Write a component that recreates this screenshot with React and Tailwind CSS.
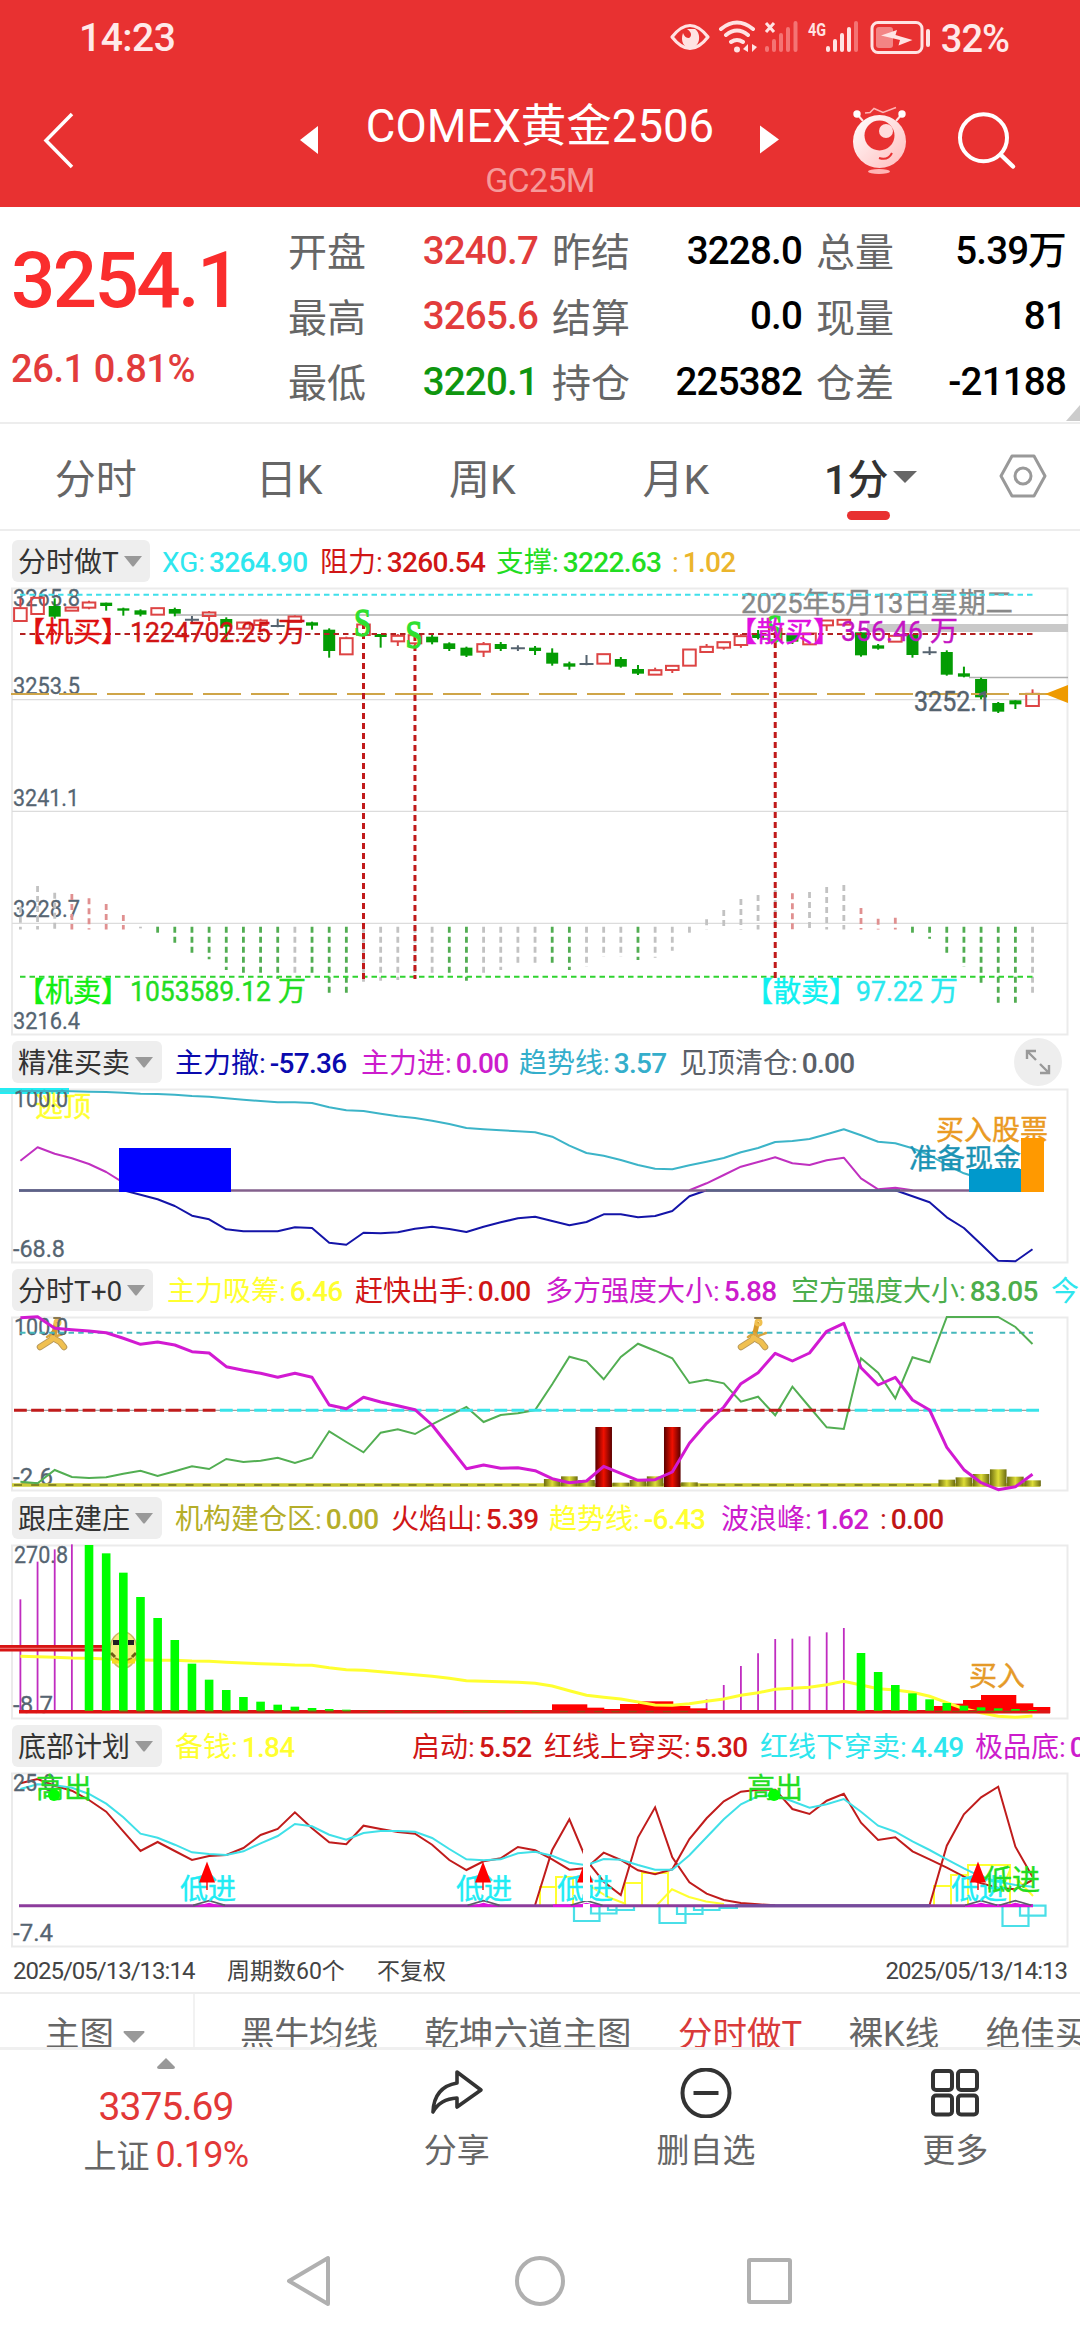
const FONT = 'font-[Roboto,"Noto_Sans_CJK_SC",sans-serif]'

// 60 one-minute bars share the same x positions in every panel
const X = (i) => 20.4 + i * 17.155

// series are stored in thirds of a pixel below the panel group's origin
const line = (values, origin, from = 0) =>
  values.map((v, i) => `${X(from + i).toFixed(1)},${(origin + v / 3).toFixed(1)}`).join(' ')

// [kind, body top, body bottom, high, low]
const CANDLES = [
  ['r', 203, 243, 175, 243], ['r', 172, 222, 172, 222], ['g', 198, 230, 175, 236], ['r', 201, 212, 201, 212],
  ['r', 186, 203, 182, 208], ['g', 188, 198, 188, 212], ['g', 205, 212, 203, 227], ['g', 211, 224, 208, 229],
  ['r', 203, 224, 203, 224], ['g', 207, 221, 203, 229], ['n', 239, 239, 228, 248], ['r', 216, 228, 213, 243],
  ['g', 237, 260, 232, 300], ['r', 246, 266, 246, 266], ['r', 240, 255, 236, 262], ['n', 258, 258, 236, 262],
  ['r', 228, 246, 226, 246], ['g', 247, 257, 245, 269], ['g', 269, 333, 265, 353], ['r', 293, 343, 290, 343],
  ['r', 252, 285, 252, 285], ['g', 282, 291, 282, 323], ['r', 286, 304, 282, 318], ['r', 284, 310, 284, 318],
  ['g', 290, 307, 282, 313], ['g', 310, 327, 307, 333], ['g', 323, 347, 320, 351], ['r', 311, 335, 306, 351],
  ['g', 312, 327, 306, 333], ['n', 325, 325, 316, 333], ['g', 323, 333, 318, 345], ['g', 338, 371, 325, 377],
  ['g', 370, 380, 365, 389], ['n', 372, 372, 345, 376], ['r', 341, 371, 341, 371], ['g', 357, 380, 351, 383],
  ['g', 387, 401, 375, 405], ['r', 389, 404, 383, 404], ['r', 376, 390, 376, 399], ['r', 327, 377, 327, 377],
  ['r', 319, 336, 312, 336], ['r', 305, 323, 305, 329], ['r', 287, 315, 282, 323], ['g', 281, 294, 270, 298],
  ['r', 265, 300, 265, 300], ['g', 283, 305, 283, 312], ['r', 279, 313, 279, 313], ['r', 240, 256, 240, 273],
  ['r', 238, 254, 238, 254], ['g', 277, 346, 277, 350], ['g', 316, 326, 312, 329], ['r', 286, 305, 286, 305],
  ['g', 283, 345, 283, 353], ['n', 337, 337, 320, 345], ['g', 336, 404, 331, 407], ['g', 400, 410, 380, 412],
  ['g', 417, 472, 413, 478], ['g', 489, 515, 486, 519], ['g', 481, 493, 481, 507], ['r', 460, 498, 448, 498],
]

const POWER = [
  ['n', 1100], ['n', 1038], ['n', 1058], ['r', 1062], ['r', 1075], ['r', 1092], ['r', 1125], ['n', 1165],
  ['g', 1185], ['g', 1211], ['g', 1244], ['g', 1258], ['g', 1290], ['g', 1302], ['g', 1310], ['g', 1316],
  ['n', 1307], ['g', 1310], ['g', 1358], ['g', 1358], ['n', 1325], ['n', 1322], ['n', 1320], ['n', 1315],
  ['n', 1305], ['g', 1310], ['g', 1322], ['n', 1300], ['n', 1290], ['n', 1277], ['n', 1268], ['g', 1280],
  ['g', 1290], ['n', 1281], ['n', 1251], ['n', 1251], ['g', 1260], ['n', 1253], ['n', 1232], ['n', 1185],
  ['n', 1138], ['n', 1110], ['n', 1077], ['n', 1065], ['n', 1050], ['r', 1060], ['n', 1056], ['n', 1041],
  ['n', 1035], ['r', 1104], ['r', 1136], ['r', 1133], ['g', 1180], ['g', 1196], ['g', 1249], ['g', 1281],
  ['g', 1337], ['g', 1391], ['g', 1397], ['n', 1366],
]
const POWER_COLORS = { n: '#c2c2c2', r: '#e09090', g: '#52ad52' }

const TREND = [
  183, 183, 183, 184, 185, 186, 188, 191, 192, 194, 198, 200, 205, 209, 213, 217, 217, 219, 232, 241, 243, 251, 259,
  264, 272, 282, 294, 298, 301, 304, 307, 320, 347, 369, 377, 390, 405, 416, 418, 406, 395, 384, 367, 354, 336, 333,
  327, 313, 298, 316, 335, 340, 355, 376, 405, 430, 446,
]
const ENTER_LEFT = [392, 352, 371, 385, 402, 426, 458]
const ENTER_RIGHT = [481, 460, 435, 410, 396, 382, 400, 405, 391, 383, 445, 478, 473, 481]
const LEAVE_LEFT = [
  481, 494, 508, 528, 557, 568, 598, 604, 604, 604, 592, 594, 638, 644, 608, 610, 607, 596, 590, 597, 606, 590, 577,
  565, 560, 573, 586, 576, 553, 553, 562, 558, 543, 499, 481,
]
const LEAVE_RIGHT = [481, 499, 517, 562, 594, 643, 692, 694, 658]

const LONG = [
  863, 860, 895, 899, 903, 908, 925, 943, 936, 945, 965, 969, 1010, 1021, 1030, 1042, 1030, 1042, 1125, 1136, 1102,
  1116, 1127, 1139, 1185, 1250, 1316, 1305, 1315, 1313, 1322, 1346, 1358, 1353, 1309, 1330, 1351, 1349, 1326, 1240,
  1180, 1131, 1061, 1028, 970, 993, 969, 904, 880, 1013, 1065, 1042, 1110, 1140, 1252, 1319, 1358, 1379, 1370, 1333,
]
const SHORT = [
  1355, 1360, 1320, 1341, 1344, 1342, 1331, 1322, 1338, 1324, 1309, 1317, 1287, 1296, 1292, 1283, 1299, 1283, 1204,
  1236, 1267, 1208, 1198, 1212, 1183, 1157, 1131, 1176, 1155, 1150, 1140, 1063, 980, 994, 1048, 981, 941, 962, 985,
  1059, 1049, 1060, 1115, 1100, 1156, 1070, 1131, 1192, 1197, 985, 1028, 1105, 982, 997, 861, 861, 861, 861, 891, 942,
]
const SUCK = { 31: 1347, 32: 1339, 33: 1350, 35: 1358, 36: 1350, 37: 1339, 39: 1357, 54: 1349, 55: 1342, 56: 1332, 57: 1318, 58: 1340, 59: 1351 }

const WAVE = [
  499, 500, 502, 504, 505, 507, 509, 510, 511, 511, 513, 514, 517, 519, 521, 523, 525, 526, 533, 539, 541, 545, 550,
  554, 559, 565, 572, 574, 575, 577, 580, 588, 602, 616, 622, 627, 636, 645, 646, 641, 634, 627, 616, 608, 598, 595,
  592, 584, 574, 585, 596, 600, 607, 619, 638, 656, 668, 679, 682, 678,
]
const PEAKS = [[0, 328], [1, 215], [2, 178], [3, 163], [40, 628], [41, 585], [42, 528], [43, 490], [44, 447], [45, 446], [46, 439], [47, 427], [48, 414]]
const GREENS = [
  [4, 165], [5, 190], [6, 248], [7, 321], [8, 384], [9, 450], [10, 521], [11, 569], [12, 600], [13, 621], [14, 635],
  [15, 644], [16, 650], [17, 654], [18, 657], [19, 659], [49, 489], [50, 546], [51, 585], [52, 610], [53, 628],
  [54, 639], [55, 647], [56, 652], [57, 655], [58, 657], [59, 660],
]
// [left, right, top]
const FLAMES = [
  [552, 587, 643], [587, 604, 653], [604, 620, 657], [620, 638, 642], [638, 673, 634], [673, 690, 648], [690, 707, 655],
  [707, 724, 660], [934, 951, 648], [951, 963, 641], [963, 981, 630], [981, 1016, 615], [1016, 1033, 640], [1033, 1050, 651],
]

const UP = [
  880, 867, 887, 902, 930, 965, 1024, 1083, 1056, 1083, 1110, 1098, 1095, 1074, 1035, 1017, 967, 1015, 1057, 1063,
  1007, 1017, 1026, 1031, 1064, 1110, 1140, 1114, 1105, 1071, 1081, 1108, 1139, 1134, 1088, 1110, 1141, 1153, 1138,
  1047, 985, 934, 905, 899, 899, 957, 972, 932, 911, 998, 1050, 1042, 1084, 1108, 1133, 1160, 1180, 1194, 1198, 1170,
]
const DOWN = [
  897, 883, 886, 893, 912, 941, 982, 1031, 1043, 1064, 1087, 1092, 1095, 1084, 1060, 1038, 1002, 1009, 1034, 1049,
  1029, 1023, 1023, 1025, 1044, 1077, 1108, 1111, 1108, 1090, 1085, 1097, 1118, 1126, 1107, 1109, 1125, 1139, 1139,
  1096, 1042, 988, 943, 918, 916, 934, 953, 943, 927, 965, 1007, 1025, 1054, 1080, 1108, 1135, 1160, 1175, 1185, 1190,
]
const START = [1245, 1080, 988, 1110, 1175, 1215, 1042, 952, 1102, 1177, 1211, 1230, 1239, 1243, 1246]
const START_RIGHT = [1245, 1067, 973, 922, 890, 1070, 1160]

function Label({ x, y, w, children }) {
  return (
    <text x={x} y={y} fontSize="24.5" fill="#566572" stroke="#566572" strokeWidth="0.3" textLength={w} lengthAdjust="spacingAndGlyphs">{children}</text>
  )
}

function Note({ x, y, fill, size = 28, w, children }) {
  return (
    <text x={x} y={y} fontSize={size} fill={fill} stroke={fill} strokeWidth="0.4" textLength={w} lengthAdjust="spacingAndGlyphs">{children}</text>
  )
}

function Panel({ top, height, children }) {
  return (
    <svg viewBox={`0 ${top} 1080 ${height}`} width="1080" height={height} className="block shrink-0 overflow-visible">
      <rect x="12" y={top + 0.5} width="1055.5" height={height - 1} fill="none" stroke="#ebebeb" strokeWidth="2" />
      {children}
    </svg>
  )
}

function Legend({ name, width, items, children }) {
  return (
    <div className="flex items-center h-[54px] shrink-0 text-[28px] leading-none whitespace-nowrap overflow-hidden">
      <div className={`flex items-center shrink-0 ml-3 h-[42px] rounded-md bg-[#eeeeee] text-[#333] pl-[6px] ${width}`}>
        <span className="pt-[3px]">{name}</span>
        <svg width="20" height="11" viewBox="0 0 20 11" className="ml-1">
          <path d="M1 0h18L11 10q-1 1-2 0z" fill="#999" />
        </svg>
      </div>
      {items.map(([label, value, cls]) => (
        <div key={label + value} className={`flex shrink-0 pt-[4px] ${cls}`}>
          <span>{label}:</span>
          <span className="ml-1 font-medium tracking-[-0.7px]">{value}</span>
        </div>
      ))}
      {children}
    </div>
  )
}

function StatusBar() {
  return (
    <div className="flex justify-between items-center h-[77px] pl-[79px] pr-[71px] text-[#ffe9e9] text-[39px] leading-none">
      <span className="font-medium tracking-[-0.5px]">14:23</span>
      <div className="flex items-center">
        <svg width="264" height="40" viewBox="668 18 264 40" fill="none" stroke="#ffe3e3">
          <path d="M671 36Q689 13 707 36Q689 59 671 36z" strokeWidth="3.200" strokeLinejoin="round" />
          <path d="M686 28c6 4 4 8 2 9c-3 0-5-2-6-5c-3 8 1 15 7 15c10 0 12-14 5-19z" fill="#ffe3e3" stroke="none" />
          <path d="M720 28Q736 15 752 28M725 34Q736 25 747 34M730 41Q736 37 742 41" strokeWidth="4" strokeLinecap="round" />
          <circle cx="736" cy="48.500" r="3" fill="#ffe3e3" stroke="none" />
          <path d="M742 48l5-5v8zM751 43v8l5-5z" fill="#ffe3e3" stroke="none" />
          <path d="M765 22l8 9M773 22l-8 9" strokeWidth="3" />
          <path d="M766 47v2M773 40v9M780 34v15M787 28v21M794.500 22v27" stroke="#f47474" strokeWidth="4" strokeLinecap="round" />
          <path d="M827 47v2M834 40v9M841 34v15M848 28v21" strokeWidth="4" strokeLinecap="round" />
          <path d="M855 22v27" stroke="#f47474" strokeWidth="4" strokeLinecap="round" />
          <text x="807" y="34.500" fontSize="19" fontWeight="700" fill="#ffe3e3" stroke="none" textLength="18" lengthAdjust="spacingAndGlyphs">4G</text>
          <rect x="871" y="21.500" width="50" height="30" rx="6" strokeWidth="3" />
          <rect x="875" y="26" width="17" height="21" rx="3" fill="#f38585" stroke="none" />
          <path d="M880 34.500l16-5.500l-1.500 5l5 1.500l12 3.500l-14 5.500l1.500-5.500z" fill="#ffe3e3" stroke="none" />
          <path d="M927 30v14" strokeWidth="4" strokeLinecap="round" />
        </svg>
        <span className="ml-2 font-medium text-[38px] tracking-[-1px]">32%</span>
      </div>
    </div>
  )
}

function Header() {
  return (
    <div className="flex h-[130px]">
      <svg width="340" height="131" viewBox="0 76 340 131">
        <path d="M72 113L46 139.500L72 166" fill="none" stroke="#fff" strokeWidth="3.500" />
        <path d="M300 139l18-14v28z" fill="#fff" />
      </svg>
      <div className="flex flex-col items-center w-[400px] pt-[27px] leading-none text-white">
        <div className="text-[45.500px] h-[52px] whitespace-nowrap">COMEX黄金2506</div>
        <div className="mt-[7px] text-[34px] text-[#f59a9a] tracking-[-0.7px]">GC25M</div>
      </div>
      <svg width="340" height="131" viewBox="740 76 340 131">
        <defs>
          <linearGradient id="ball" x1="0" y1="0" x2="1" y2="1">
            <stop offset="0" stopColor="#fff" />
            <stop offset="1" stopColor="#ffbcbc" />
          </linearGradient>
        </defs>
        <path d="M779 138.500l-19-14v28z" fill="#fff" />
        <circle cx="879.500" cy="140.500" r="26.500" fill="url(#ball)" />
        <circle cx="879.500" cy="134.500" r="15" fill="#e83131" />
        <circle cx="886" cy="130" r="7" fill="#ffdcdc" />
        <path d="M879 157q9 3 13-5" fill="none" stroke="#e83131" strokeWidth="2" />
        <path d="M857 113l6 7M902 113l-6 7" stroke="#ffe3e3" strokeWidth="2" />
        <circle cx="857" cy="113" r="3.700" fill="#fff" />
        <circle cx="902" cy="113" r="3.700" fill="#fff" />
        <path d="M865 112l5-.5l4-4l9 4l13-5" fill="none" stroke="#ffb5b5" strokeWidth="1.500" />
        <ellipse cx="879" cy="170.500" rx="11" ry="2.500" fill="#ffb5b5" />
        <circle cx="983.500" cy="136.700" r="23.500" fill="none" stroke="#fff" strokeWidth="4" />
        <path d="M1001 154l12 11.500" stroke="#fff" strokeWidth="4.500" strokeLinecap="round" />
      </svg>
    </div>
  )
}

const QUOTES = [
  [['开盘', '3240.7', 'text-[#e23c3c]'], ['昨结', '3228.0', 'text-black'], ['总量', '5.39万', 'text-black']],
  [['最高', '3265.6', 'text-[#e23c3c]'], ['结算', '0.0', 'text-black'], ['现量', '81', 'text-black']],
  [['最低', '3220.1', 'text-[#0f960f]'], ['持仓', '225382', 'text-black'], ['仓差', '-21188', 'text-black']],
]

function Quote() {
  return (
    <div className="relative flex h-[214px]">
      <div className="w-[288px] pl-[11px] leading-none font-medium">
        <div className="mt-[35px] h-[78px] text-[78px] text-[#fa2d2d] tracking-[-2.6px]">3254.1</div>
        <div className="mt-[30px] text-[38px] text-[#e23c3c] tracking-[-0.4px]">26.1 0.81%</div>
      </div>
      <div className="flex flex-col pt-[14px]">
        {QUOTES.map((row) => (
          <div key={row[0][0]} className="flex h-[65.5px] items-center leading-none">
            {row.map(([label, value, color]) => (
              <div key={label} className="flex items-center justify-between w-[250px] mr-[14px]">
                <span className="text-[39px] text-[#666]">{label}</span>
                <span className={`text-[38.5px] font-medium tracking-[-0.8px] -mt-[6px] ${color}`}>{value}</span>
              </div>
            ))}
          </div>
        ))}
      </div>
      <svg width="14" height="16" className="absolute right-0 bottom-0">
        <path d="M14 0v16H0z" fill="#ccc" />
      </svg>
    </div>
  )
}

function Tabs() {
  return (
    <div className="flex h-[109px] border-y-2 border-[#ededed] text-[41px] leading-none text-[#666]">
      {['分时', '日K', '周K', '月K'].map((t) => (
        <div key={t} className="w-[193.4px] text-center pt-[36px] pr-[2px]">{t}</div>
      ))}
      <div className="relative w-[193.4px] flex justify-center pt-[36px] font-medium text-[#333]">
        <span className="-ml-[28px]">1分</span>
        <svg width="24" height="13" viewBox="0 0 24 13" className="absolute left-[119px] top-[47px]">
          <path d="M0 0h24L12 12z" fill="#666" />
        </svg>
        <div className="absolute left-[73px] top-[87px] w-[43px] h-[9px] rounded-full bg-[#e83131]" />
      </div>
      <svg width="50" height="46" viewBox="0 0 50 46" fill="none" stroke="#999" strokeWidth="3" className="ml-[31px] mt-[29px]">
        <path d="M14 3h22l11 20l-11 20h-22l-11-20z" strokeLinejoin="round" />
        <circle cx="25" cy="23" r="8" />
      </svg>
    </div>
  )
}

function MainPanel() {
  const O = 540
  return (
    <Panel top={588} height={447}>
      <path d="M12 699.700H1068M12 811.300H1068M12 923.300H1068" stroke="#dcdcdc" strokeWidth="1.300" />
      <path d="M175 615H1068M969 677.500H1068" stroke="#b0b0b0" strokeWidth="1.500" />
      <rect x="867" y="624" width="201" height="8" fill="#c9c9c9" />
      <Label x="13" y="606" w="67">3265.8</Label>
      <Label x="13" y="694" w="67">3253.5</Label>
      <Label x="13" y="806" w="66">3241.1</Label>
      <Label x="13" y="917" w="67">3228.7</Label>
      <Label x="13" y="1029" w="67">3216.4</Label>
      <Note x="741" y="613" w="272" size="28" fill="#888">2025年5月13日星期二</Note>
      {POWER.map(([c, v], i) => (
        <line key={i} x1={X(i)} x2={X(i)} y1={v < 1165 ? O + v / 3 : 926.700} y2={v < 1165 ? 929.500 : O + v / 3} stroke={POWER_COLORS[c]} strokeWidth="2.800" strokeDasharray="6 4" />
      ))}
      {CANDLES.map(([c, t, b, h, l], i) => {
        const x = X(i)
        if (c === 'n') return <path key={i} d={`M${x - 7} ${O + t / 3}h14M${x} ${O + h / 3}V${O + l / 3}`} stroke="#55636f" strokeWidth="2" />
        if (c === 'g') {
          return (
            <g key={i} fill="#049c04">
              <rect x={x - 6} y={O + t / 3} width="12" height={(b - t) / 3} />
              <rect x={x - 1} y={O + h / 3} width="2" height={(l - h) / 3} />
            </g>
          )
        }
        return (
          <g key={i} stroke="#dd4444" strokeWidth="2" fill="none">
            <rect x={x - 6.300} y={O + t / 3 + 0.5} width="12.600" height={(b - t) / 3 - 0.5} />
            <path d={`M${x} ${O + h / 3}V${O + t / 3}M${x} ${O + b / 3}V${O + l / 3}`} />
          </g>
        )
      })}
      <path d="M20 594.700H1033" stroke="#3fe0ea" strokeWidth="2" strokeDasharray="5.500 4" />
      <path d="M20 634H1033" stroke="#b32020" strokeWidth="2" strokeDasharray="5.500 4" />
      <path d="M20 976.700H1033" stroke="#2fd32f" strokeWidth="2" strokeDasharray="5.500 4" />
      <path d="M11 694H1050" stroke="#cfa548" strokeWidth="2" strokeDasharray="38 10" />
      <path d="M1045 694l23-9v18z" fill="#ee9a00" />
      <Note x="914" y="711" w="77" size="27" fill="#55636f">3252.1</Note>
      {[[20, 623], [23, 635], [44, 632]].map(([i, y]) => (
        <line key={i} x1={X(i)} x2={X(i)} y1={y} y2="979" stroke="#c01a1a" strokeWidth="3" strokeDasharray="6 4" />
      ))}
      {[[20, 636], [23, 648], [44, 642]].map(([i, y]) => (
        <text key={i} x={X(i) - 9.500} y={y} fontSize="41" textLength="17" lengthAdjust="spacingAndGlyphs" fill="#2fe02f" stroke="#2fe02f" strokeWidth="1.500" className="font-['Liberation_Serif',serif]">S</text>
      ))}
      <Note x="17" y="642" w="112" fill="#e01010">【机买】</Note>
      <Note x="130" y="642" w="141" fill="#d01414">1224702.25</Note>
      <Note x="278" y="642" fill="#d01414">万</Note>
      <Note x="17" y="1002" w="112" fill="#10ee10">【机卖】</Note>
      <Note x="130" y="1001" w="141" fill="#22dd22">1053589.12</Note>
      <Note x="278" y="1001" fill="#22dd22">万</Note>
      <Note x="729" y="642" w="112" fill="#e010e0">【散买】</Note>
      <Note x="841" y="641" w="82" fill="#c414c4">356.46</Note>
      <Note x="930" y="641" fill="#c414c4">万</Note>
      <Note x="745" y="1002" w="112" fill="#10f0f0">【散卖】</Note>
      <Note x="856" y="1001" w="67" fill="#2ae8ee">97.22</Note>
      <Note x="930" y="1001" fill="#2ae8ee">万</Note>
    </Panel>
  )
}

function TradePanel() {
  return (
    <Panel top={1089} height={174}>
      <path d="M0 1091H69" stroke="#25ecf2" strokeWidth="6" />
      <path d="M0 1091H69" stroke="#5ad0d8" strokeWidth="1" />
      <Note x="35" y="1117" w="56" fill="#ffff30">逃顶</Note>
      <Label x="14" y="1107" w="54">100.0</Label>
      <Label x="13" y="1257" w="52">-68.8</Label>
      <g fill="none" strokeWidth="2" strokeLinejoin="round">
        <polyline points={line(TREND, 1030)} stroke="#3cb4c8" />
        <polyline points={line(ENTER_LEFT, 1030)} stroke="#c030c0" />
        <polyline points={line(ENTER_RIGHT, 1030, 39)} stroke="#c030c0" />
        <polyline points={line(LEAVE_LEFT, 1030, 6)} stroke="#1414a8" />
        <polyline points={line(LEAVE_RIGHT, 1030, 51)} stroke="#1414a8" />
      </g>
      <path d="M19 1190.500H1033" stroke="#83608c" strokeWidth="2.600" />
      <path d="M19 1190.500H120M706 1190.500H900" stroke="#5b6388" strokeWidth="2.600" />
      <rect x="119" y="1148" width="112" height="44" fill="#0000ff" />
      <Note x="936" y="1140" w="112" fill="#ea9a22">买入股票</Note>
      <Note x="909" y="1169" w="112" fill="#1b93b4">准备现金</Note>
      <rect x="969" y="1169" width="52" height="23" fill="#0099cc" />
      <rect x="1021" y="1138" width="23" height="54" fill="#ff9900" />
    </Panel>
  )
}

function Runner({ x }) {
  return (
    <g transform={`translate(${x} 1318)`} fill="none" stroke="#f0c050" strokeLinecap="round" strokeLinejoin="round">
      <path d="M18 15L15 22L4 29M17 20L24 24L28 29" stroke="#b99a5c" strokeWidth="6.500" />
      <path d="M18 15L15 22L4 29M17 20L24 24L28 29" strokeWidth="4.500" />
      <path d="M20 6L18 15" stroke="#d69a28" strokeWidth="5" />
      <path d="M11 19l6-4l4 3l8-3" stroke="#d9a640" strokeWidth="2.500" />
      <circle cx="21.500" cy="4.500" r="2.500" strokeWidth="3" />
      <path d="M18 0h6" stroke="#8c7a50" strokeWidth="2" />
    </g>
  )
}

function IntradayPanel() {
  return (
    <Panel top={1317} height={174}>
      <defs>
        <linearGradient id="gold">
          <stop offset="0" stopColor="#6b6b10" />
          <stop offset=".5" stopColor="#dede38" />
          <stop offset="1" stopColor="#6b6b10" />
        </linearGradient>
        <linearGradient id="ruby">
          <stop offset="0" stopColor="#5a0000" />
          <stop offset=".5" stopColor="#f01000" />
          <stop offset="1" stopColor="#5a0000" />
        </linearGradient>
      </defs>
      <Runner x={36} />
      <Runner x={737} />
      <Label x="14" y="1335" w="54">100.0</Label>
      <Label x="13" y="1485" w="40">-2.6</Label>
      <path d="M20 1332.700H1033" stroke="#44b8bc" strokeWidth="2" strokeDasharray="5.500 4.200" />
      <path d="M12 1485H1040" stroke="#cccc36" strokeWidth="3.500" />
      <path d="M14 1485H1040" stroke="#6e6e1c" strokeWidth="1.500" strokeDasharray="8 9.155" />
      {Object.entries(SUCK).map(([i, v]) => (
        <rect key={i} x={X(Number(i)) - 8.300} y={1030 + v / 3} width="16.600" height={(1369 - v) / 3} fill="url(#gold)" />
      ))}
      {[34, 38].map((i) => (
        <rect key={i} x={X(i) - 8.300} y="1427" width="16.600" height="60" fill="url(#ruby)" />
      ))}
      <polyline points={line(SHORT, 1030)} fill="none" stroke="#52ae52" strokeWidth="2" />
      <path d="M14 1410.300H1039" stroke="#8a8a8a" strokeWidth="1" />
      <g strokeWidth="3" strokeDasharray="12.800 4.355">
        <path d="M14 1410.300H218M700.300 1410.300H851" stroke="#c01c1c" />
        <path d="M219.900 1410.300H699M854.700 1410.300H1040" stroke="#38e4ea" />
      </g>
      <polyline points={line(LONG, 1030)} fill="none" stroke="#d21ad2" strokeWidth="3" strokeLinejoin="round" />
    </Panel>
  )
}

function BankerPanel() {
  return (
    <Panel top={1545} height={174}>
      <Label x="14" y="1563" w="54">270.8</Label>
      <Label x="13" y="1713" w="40">-8.7</Label>
      {PEAKS.map(([i, v]) => (
        <line key={i} x1={X(i)} x2={X(i)} y1={1490 + v / 3} y2="1711" stroke="#c02cc0" strokeWidth="1.800" />
      ))}
      <path d="M0 1648.300H105" stroke="#d81414" strokeWidth="6.500" />
      <path d="M0 1648.300H105" stroke="#f08080" strokeWidth="1" />
      {FLAMES.map(([l, r, t]) => (
        <rect key={l} x={l} y={1490 + t / 3} width={r - l + 0.3} height={(669 - t) / 3} fill="#ff0000" />
      ))}
      <polyline points={line(WAVE, 1490)} fill="none" stroke="#ffff30" strokeWidth="3" />
      <ellipse cx="123.500" cy="1650" rx="13.500" ry="18" fill="#f5ec80" stroke="#cdb765" strokeWidth="1.500" />
      <path d="M113 1640h6v5h-6zM128 1640h6v5h-6z" fill="#222" />
      <path d="M111 1653l4 4M136 1653l-4 4" fill="none" stroke="#6e5c14" strokeWidth="3" />
      <path d="M112 1661h23" stroke="#f5da20" strokeWidth="5" />
      <path d="M115 1658q8 5 17 0" fill="none" stroke="#9c8220" strokeWidth="1.500" />
      <path d="M19 1711.700H1050" stroke="#dd1414" strokeWidth="3.500" />
      <path d="M120 1711.700H540M560 1711.700H700M935 1711.700H1036" stroke="#7a5a10" strokeWidth="1" strokeDasharray="8 9.155" />
      {GREENS.map(([i, v]) => (
        <rect key={i} x={X(i) - 4.300} y={1490 + v / 3} width="8.600" height={Math.max((662 - v) / 3, 1)} fill="#00ff00" />
      ))}
      <Note x="969" y="1686" w="56" fill="#e59a28">买入</Note>
    </Panel>
  )
}

function BottomPanel() {
  const base = 1905.7
  return (
    <Panel top={1773} height={174}>
      <g fill="none" stroke="#ffff30" strokeWidth="2">
        <path d="M540 1905V1887h16V1905M556 1887V1877h17V1905M573 1877h10M625 1905V1883h17V1905M642 1883V1873h26V1905" />
        <path d="M590 1886l18 11l18 7M657 1905L672 1889.300L689 1897L706 1901.500L724 1904" />
        <path d="M934 1905V1886h17V1905M951 1886V1875h17V1905M968 1875V1865h42V1905M1010 1870L1001 1892M1016 1878l17 18" />
      </g>
      <g fill="none" stroke="#4adfe8" strokeWidth="2.200">
        <path d="M574 1906v15h25.500v-15M591 1906v7.500h25.500v-7.500M608 1906v4h26v-4" />
        <path d="M659.500 1906v17h26v-17M677 1906v8h25.500v-8M694 1906v4h25.500v-4M719 1908h19" />
        <path d="M1002.500 1906v20h26v-20M1020 1906v9.700h25.500v-10H1020" />
      </g>
      <g fill="none" stroke="#c01c1c" strokeWidth="2">
        <polyline points={line(UP, 1490)} />
        <polyline points={line(START, 1490, 30)} />
        <polyline points={line(START_RIGHT, 1490, 53)} />
      </g>
      <polyline points={line(DOWN, 1490)} fill="none" stroke="#40e0e8" strokeWidth="2" />
      <Label x="13" y="1791" w="42">25.0</Label>
      <Label x="13" y="1941" w="40">-7.4</Label>
      <path d="M19 1905.700H1033" stroke="#8c3c9c" strokeWidth="3" />
      <path d="M735 1905.700H930" stroke="#744c9c" strokeWidth="3" />
      <path d="M553 1905.700H600M965 1905.700H1033" stroke="#e010e0" strokeWidth="2.600" />
      {[11, 27, 33, 56, 58].map((i) => (
        <g key={i}>
          <path d={`M${X(i) - 15} ${base + 1}L${X(i)} ${base - 3}L${X(i) + 15} ${base + 1}z`} fill="#e010e0" />
          <path d={`M${X(i) - 16} ${base - 0.5}L${X(i)} ${base - 5}L${X(i) + 16} ${base - 0.5}`} fill="none" stroke="#5c5c68" strokeWidth="1.700" />
        </g>
      ))}
      <Note x="36" y="1798" w="56" fill="#22dd22">高出</Note>
      <Note x="747" y="1798" w="56" fill="#22dd22">高出</Note>
      <circle cx="54" cy="1795" r="6" fill="#00ff00" />
      <circle cx="774" cy="1795" r="6" fill="#00ff00" />
      <Note x="180" y="1899" w="56" fill="#20ecf4">低进</Note>
      <Note x="456" y="1899" w="56" fill="#20ecf4">低进</Note>
      <Note x="557" y="1899" w="56" fill="#20ecf4">低进</Note>
      <Note x="951" y="1899" w="56" fill="#20ecf4">低进</Note>
      <Note x="984" y="1890" w="56" fill="#22dd22">低进</Note>
      {[207, 483, 585, 978].map((x) => (
        <path key={x} d={`M${x} 1861.500l8 21h-16zM${x - 0.7} 1882h1.400v8h-1.400z`} fill="#ff0000" />
      ))}
      <rect x="583" y="1850" width="7" height="51" fill="#fff" />
      <rect x="583" y="1904" width="7" height="4" fill="#fff" />
    </Panel>
  )
}

function Charts() {
  return (
    <div className="flex flex-col pt-[2px]">
      <Legend
        name="分时做T"
        width="w-[138px]"
        items={[
          ['XG', '3264.90', 'ml-3 w-[158px] text-[#2ee6ee]'],
          ['阻力', '3260.54', 'w-[176px] text-[#d01616]'],
          ['支撑', '3222.63', 'w-[176px] text-[#22dd22]'],
          ['', '1.02', 'text-[#ebb52c]'],
        ]}
      />
      <MainPanel />
      <Legend
        name="精准买卖"
        width="w-[150px]"
        items={[
          ['主力撤', '-57.36', 'ml-[13px] w-[186px] text-[#0a0aae]'],
          ['主力进', '0.00', 'w-[158px] text-[#cc1ccc]'],
          ['趋势线', '3.57', 'w-[160px] text-[#34aecb]'],
          ['见顶清仓', '0.00', 'text-[#5a6068]'],
        ]}
      >
        <div className="flex items-center justify-center ml-auto mr-[18px] size-12 rounded-full bg-[#eeeeee]">
          <svg width="26" height="26" viewBox="0 0 26 26" fill="none" stroke="#999" strokeWidth="2.400">
            <path d="M2 10V2h9M2 2l9 9M24 16v8h-9M24 24l-9-9" />
          </svg>
        </div>
      </Legend>
      <TradePanel />
      <Legend
        name="分时T+0"
        width="w-[141px]"
        items={[
          ['主力吸筹', '6.46', 'ml-[14px] w-[188px] text-[#ffff30]'],
          ['赶快出手', '0.00', 'w-[190px] text-[#d01616]'],
          ['多方强度大小', '5.88', 'w-[246px] text-[#cc1ccc]'],
          ['空方强度大小', '83.05', 'w-[260px] text-[#4cae4c]'],
          ['今日', '', 'text-[#2ee6ee]'],
        ]}
      />
      <IntradayPanel />
      <Legend
        name="跟庄建庄"
        width="w-[150px]"
        items={[
          ['机构建仓区', '0.00', 'ml-[13px] w-[216px] text-[#b5ae2a]'],
          ['火焰山', '5.39', 'w-[158px] text-[#d01616]'],
          ['趋势线', '-6.43', 'w-[172px] text-[#ffff30]'],
          ['波浪峰', '1.62', 'w-[159px] text-[#cc1ccc]'],
          ['', '0.00', 'text-[#c01616]'],
        ]}
      />
      <BankerPanel />
      <Legend
        name="底部计划"
        width="w-[150px]"
        items={[
          ['备钱', '1.84', 'ml-[13px] w-[237px] text-[#ffff30]'],
          ['启动', '5.52', 'w-[132px] text-[#d01616]'],
          ['红线上穿买', '5.30', 'w-[216px] text-[#d01616]'],
          ['红线下穿卖', '4.49', 'w-[215px] text-[#2ee6ee]'],
          ['极品底', '0.00', 'text-[#cc1ccc]'],
        ]}
      />
      <BottomPanel />
    </div>
  )
}

function BottomBar() {
  return (
    <div className="flex h-[150px] border-t-[3px] border-[#f0f0f0] text-[33px] leading-none text-[#666]">
      <div className="flex flex-col items-center w-[332px] pt-2">
        <svg width="18" height="11" viewBox="0 0 18 11">
          <path d="M9 0l9 9q0 2-2 2H2q-2 0-2-2z" fill="#999" />
        </svg>
        <div className="mt-[19px] text-[39px] h-[39px] text-[#e23838] tracking-[-1px]">3375.69</div>
        <div className="flex items-center mt-[10px]">
          <span className="pt-[2px]">上证</span>
          <span className="ml-[6px] text-[36px] text-[#e23838] tracking-[-0.7px]">0.19%</span>
        </div>
      </div>
      <div className="flex flex-col items-center w-[249.3px] pt-[18px]">
        <svg width="54" height="50" viewBox="430 2068 54 50" fill="none" stroke="#333" strokeWidth="3.600" strokeLinejoin="round">
          <path d="M457 2072l24 18l-24 17v-9q-17 1-24 14q1-25 24-29z" />
        </svg>
        <span className="mt-[16px]">分享</span>
      </div>
      <div className="flex flex-col items-center w-[249.3px] pt-[18px]">
        <svg width="52" height="50" viewBox="0 0 52 50" fill="none" stroke="#333" strokeWidth="4">
          <circle cx="26" cy="25" r="23.500" />
          <path d="M13.500 25h25" />
        </svg>
        <span className="mt-[16px]">删自选</span>
      </div>
      <div className="flex flex-col items-center w-[249.3px] pt-[18px]">
        <svg width="50" height="50" viewBox="0 0 50 50" fill="none" stroke="#333" strokeWidth="4">
          <rect x="3" y="3" width="19" height="19" rx="3" />
          <rect x="28" y="3" width="19" height="19" rx="3" />
          <rect x="3" y="27.500" width="19" height="19" rx="3" />
          <rect x="28" y="27.500" width="19" height="19" rx="3" />
        </svg>
        <span className="mt-[16px]">更多</span>
      </div>
    </div>
  )
}

export default function App() {
  return (
    <div className={`flex flex-col w-[1080px] h-[2340px] overflow-hidden bg-white ${FONT}`}>
      <div className="h-[207px] shrink-0 bg-[#e83131]">
        <StatusBar />
        <Header />
      </div>
      <Quote />
      <div className="mt-px">
        <Tabs />
      </div>
      <div className="mt-px">
        <Charts />
      </div>
      <div className="flex items-center h-[47px] px-[13px] pt-[3px] text-[23px] leading-none text-[#444] border-b-2 border-[#ededed]">
        <span className="w-[214px] text-[24px] tracking-[-1px]">2025/05/13/13:14</span>
        <span className="w-[150px]">周期数60个</span>
        <span>不复权</span>
        <span className="ml-auto text-[24px] tracking-[-1px]">2025/05/13/14:13</span>
      </div>
      <div className="flex h-[53px] shrink-0 overflow-hidden whitespace-nowrap text-[34.5px] leading-none text-[#666]">
        <div className="flex shrink-0 w-[193px] pl-[45px] pt-[23px]">
          <span>主图</span>
          <svg width="22" height="13" viewBox="0 0 22 13" className="ml-[9px] mt-[14px]">
            <path d="M1 0h20q1 1 0 2l-9 9q-1 1-2 0l-9-9q-1-1 0-2z" fill="#999" />
          </svg>
        </div>
        <div className="flex gap-[46.5px] pl-[45px] pt-[23px] border-l-2 border-[#f2f2f2]">
          <span>黑牛均线</span>
          <span>乾坤六道主图</span>
          <span className="text-[#d93a3a]">分时做T</span>
          <span>裸K线</span>
          <span>绝佳买卖</span>
        </div>
      </div>
      <BottomBar />
      <div className="flex justify-center mt-[57px]">
        <svg width="520" height="54" viewBox="280 2255 520 54" fill="none" stroke="#b0b0b0" strokeWidth="4" strokeLinejoin="round">
          <path d="M289 2282l39-23v46z" />
          <circle cx="540" cy="2282" r="23" />
          <rect x="749" y="2261" width="41" height="42" rx="1" />
        </svg>
      </div>
    </div>
  )
}
